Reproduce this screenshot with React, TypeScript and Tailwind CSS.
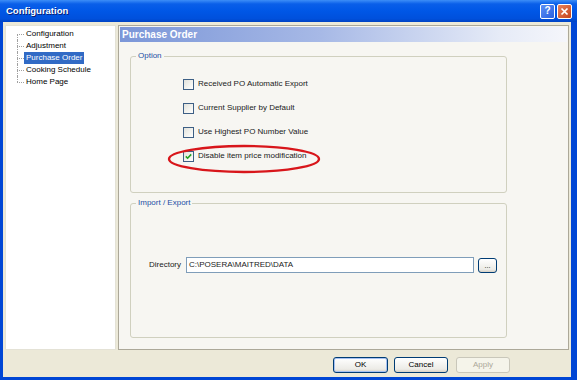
import React from 'react';

const treeItems = ['Configuration', 'Adjustment', 'Purchase Order', 'Cooking Schedule', 'Home Page'];
const options = [
  { label: 'Received PO Automatic Export', checked: false },
  { label: 'Current Supplier by Default', checked: false },
  { label: 'Use Highest PO Number Value', checked: false },
  { label: 'Disable item price modification', checked: true },
];

const XpCheckbox: React.FC<{ checked: boolean }> = ({ checked }) => (
  <div className="flex h-[11px] w-[11px] items-center justify-center border border-[#3d5f85] bg-[linear-gradient(135deg,#e2e2dc_0%,#f4f4f0_60%,#ffffff_100%)]">
    {checked && (
      <svg width="7" height="7" viewBox="0 0 7 7">
        <path d="M0.8 3.4 L2.6 5.2 L6.2 1.4" fill="none" stroke="#21a121" strokeWidth="1.6" />
      </svg>
    )}
  </div>
);

const GroupBox: React.FC<{ title: string; className: string; children: React.ReactNode }> = ({ title, className, children }) => (
  <div className={`relative rounded-[3px] border border-[#d0d0bf] ${className}`}>
    <span className="absolute left-[5px] top-[-6px] bg-[#f7f6f2] px-[2px] text-[8px] leading-[10px] text-[#1d4ea5]">{title}</span>
    {children}
  </div>
);

export default function App() {
  return (
    <div className="flex h-[380px] w-[577px] flex-col bg-[#0046d5] font-['Liberation_Sans',Arial,sans-serif] text-[8px] text-black">
      {/* Title bar */}
      <div className="flex h-[22px] items-center justify-between bg-[linear-gradient(to_bottom,#3d8ef7_0%,#0a5fe9_18%,#0057e6_50%,#0050dc_85%,#0043c4_100%)] pl-[6px] pr-[5px]">
        <span className="text-[9.5px] font-bold text-white [text-shadow:1px_1px_0_#0a1e74]">Configuration</span>
        <div className="flex gap-[2px]">
          <div className="flex h-[15px] w-[15px] items-center justify-center rounded-[2px] border border-white bg-[linear-gradient(135deg,#5d8ff5,#2861e0)] text-[10px] font-bold leading-none text-white">?</div>
          <div className="flex h-[15px] w-[15px] items-center justify-center rounded-[2px] border border-white bg-[linear-gradient(135deg,#e9835c,#c4441c)]">
            <svg width="9" height="9" viewBox="0 0 9 9">
              <path d="M1.5 1.5 L7.5 7.5 M7.5 1.5 L1.5 7.5" stroke="#fff" strokeWidth="1.7" />
            </svg>
          </div>
        </div>
      </div>

      {/* Window body */}
      <div className="ml-[3px] mr-[6px] flex h-[355px] flex-col bg-[#ece9d8] pl-[2px] pr-[2px] pt-[3px]">
        <div className="flex h-[325px] gap-[2px]">
          {/* Tree */}
          <div className="w-[111px] border border-[#e4e2d6] bg-white pl-[11px] pt-[2px]">
            {treeItems.map((item, i) => (
              <div key={item} className="flex h-[12px] items-stretch">
                <div className="flex w-[7px] flex-col">
                  <div className={`h-[6px] ${i > 0 ? 'border-l border-dotted border-[#a0a0a0]' : ''}`} />
                  <div className={`h-[6px] border-t border-dotted border-[#a0a0a0] ${i < treeItems.length - 1 ? 'border-l' : ''}`} />
                </div>
                <span
                  className={`px-[2px] leading-[12px] ${item === 'Purchase Order' ? 'bg-[#316ac5] text-white' : ''}`}
                >
                  {item}
                </span>
              </div>
            ))}
          </div>

          {/* Right panel */}
          <div className="w-[451px] border border-[#aca899] bg-[#f7f6f2] p-px">
            <div className="flex h-[15px] items-center bg-[linear-gradient(to_right,#7b96d8_0%,#a7b9e6_45%,#e6ebf7_85%,#f5f6fb_100%)] pl-[2px] text-[10px] font-bold text-white">
              Purchase Order
            </div>

            <GroupBox title="Option" className="ml-[10px] mt-[14px] h-[137px] w-[377px]">
              <div className="flex flex-col gap-[12px] pl-[52px] pt-[21px]">
                {options.map((o) => (
                  <div key={o.label} className="flex h-[12px] items-center gap-[4px]">
                    <XpCheckbox checked={o.checked} />
                    <span className="leading-[12px] text-[#1a1a1a]">{o.label}</span>
                  </div>
                ))}
              </div>
              <svg className="pointer-events-none absolute left-[36px] top-[87px]" width="154" height="30" viewBox="0 0 154 30">
                <ellipse cx="77" cy="15" rx="75" ry="13" fill="none" stroke="#d8161b" strokeWidth="2.4" />
              </svg>
            </GroupBox>

            <GroupBox title="Import / Export" className="ml-[10px] mt-[10px] h-[135px] w-[377px]">
              <div className="flex items-center pl-[18px] pt-[53px]">
                <span className="w-[37px] text-[#1a1a1a]">Directory</span>
                <div className="flex h-[16px] w-[288px] items-center border border-[#7f9db9] bg-white pl-[2px] text-[#1a1a1a]">
                  C:\POSERA\MAITRED\DATA
                </div>
                <div className="ml-[4px] flex h-[15px] w-[19px] items-center justify-center rounded-[3px] border border-[#003c74] bg-[linear-gradient(to_bottom,#ffffff,#ecebe6_80%,#d6d0c5)] text-[7px] leading-none">
                  ...
                </div>
              </div>
            </GroupBox>
          </div>
        </div>

        {/* Footer buttons */}
        <div className="flex justify-end gap-[6px] pr-[59px] pt-[7px]">
          <div className="flex h-[16px] w-[55px] items-center justify-center rounded-[3px] border border-[#003c74] bg-[linear-gradient(to_bottom,#ffffff,#ecebe6_80%,#d6d0c5)] shadow-[inset_0_0_0_1px_#a6c1f2]">
            OK
          </div>
          <div className="flex h-[16px] w-[54px] items-center justify-center rounded-[3px] border border-[#003c74] bg-[linear-gradient(to_bottom,#ffffff,#ecebe6_80%,#d6d0c5)]">
            Cancel
          </div>
          <div className="ml-[2px] flex h-[16px] w-[54px] items-center justify-center rounded-[3px] border border-[#c9c7ba] bg-[#f5f4ea] text-[#aca899]">
            Apply
          </div>
        </div>
      </div>
    </div>
  );
}
